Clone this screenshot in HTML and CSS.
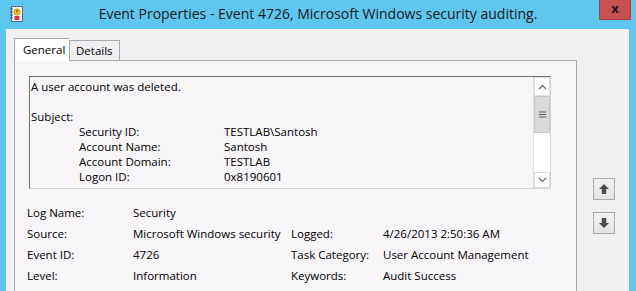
FILE: index.html
```html
<!DOCTYPE html>
<html lang="en">
<head>
  <meta charset="UTF-8">
  <title>Event Properties</title>
  <link rel="stylesheet" href="styles.css">
</head>
<body>
  <div class="window">
    <div class="titlebar">
      <svg class="app-icon" width="14" height="16" viewBox="0 0 14 16">
        <rect x="2.5" y="0.5" width="11" height="15" fill="#f4f4f4" stroke="#5a6a8a"/>
        <path d="M1 3h3M1 6h3M1 9h3M1 12h3" stroke="#4a5a7a" stroke-width="1.2"/>
        <circle cx="8" cy="6" r="3.2" fill="#f2c21b" stroke="#b8860b" stroke-width="0.6"/>
        <path d="M8 4v2.6" stroke="#5a3a00" stroke-width="1.1"/>
        <rect x="5.5" y="10" width="5" height="4" fill="#d2394a"/>
      </svg>
      <div class="title">Event Properties - Event 4726, Microsoft Windows security auditing.</div>
      <div class="close">x</div>
    </div>

    <div class="client">
      <div class="tabs">
        <div class="tabstrip">
          <div class="tab active">General</div>
          <div class="tab">Details</div>
        </div>
        <div class="panel">
          <div class="message">
            <div class="message-text">
              <div class="line">A user account was deleted.</div>
              <div class="line">&nbsp;</div>
              <div class="line">Subject:</div>
              <div class="line pair"><span class="key">Security ID:</span><span>TESTLAB\Santosh</span></div>
              <div class="line pair"><span class="key">Account Name:</span><span>Santosh</span></div>
              <div class="line pair"><span class="key">Account Domain:</span><span>TESTLAB</span></div>
              <div class="line pair"><span class="key">Logon ID:</span><span>0x8190601</span></div>
            </div>
            <div class="scrollbar">
              <div class="sb-btn sb-up">
                <svg width="9" height="6" viewBox="0 0 9 6"><path d="M1 5l3.5-3.5L8 5" fill="none" stroke="#606060" stroke-width="1.1"/></svg>
              </div>
              <div class="sb-thumb">
                <svg width="7" height="7" viewBox="0 0 7 7"><path d="M0 1h7M0 3.5h7M0 6h7" stroke="#606060" stroke-width="1.2"/></svg>
              </div>
              <div class="sb-track"></div>
              <div class="sb-btn sb-down">
                <svg width="9" height="6" viewBox="0 0 9 6"><path d="M1 1l3.5 3.5L8 1" fill="none" stroke="#606060" stroke-width="1.1"/></svg>
              </div>
            </div>
          </div>

          <div class="fields">
            <span>Log Name:</span><span>Security</span><span></span><span></span>
            <span>Source:</span><span>Microsoft Windows security</span><span>Logged:</span><span>4/26/2013 2:50:36 AM</span>
            <span>Event ID:</span><span>4726</span><span>Task Category:</span><span>User Account Management</span>
            <span>Level:</span><span>Information</span><span>Keywords:</span><span>Audit Success</span>
          </div>
        </div>
      </div>

      <div class="nav">
        <div class="nav-btn">
          <svg width="12" height="12" viewBox="0 0 12 12"><polygon points="6,1 11,6 8.2,6 8.2,11 3.8,11 3.8,6 1,6" fill="#4d4d4d"/></svg>
        </div>
        <div class="nav-btn">
          <svg width="12" height="12" viewBox="0 0 12 12"><polygon points="6,11 11,6 8.2,6 8.2,1 3.8,1 3.8,6 1,6" fill="#4d4d4d"/></svg>
        </div>
      </div>
    </div>
  </div>
</body>
</html>
```

FILE: styles.css
```css
:root {
  --frame: #5fc6ee;
  --client: #f3f0f4;
  --panel: #f7f5f8;
  --border: #a9a9a9;
}

* {
  margin: 0;
  padding: 0;
  box-sizing: border-box;
}

body {
  font-family: 'Open Sans', 'Noto Sans', sans-serif;
  font-size: 11.5px;
  color: #000;
  background-color: var(--frame);
  overflow: hidden;
}

.window {
  display: flex;
  flex-direction: column;
  height: 100vh;
}

.titlebar {
  height: 29px;
  display: grid;
  grid-template-columns: 1fr auto 1fr;
  align-items: start;
}

.app-icon {
  margin: 6px 0 0 9px;
}

.title {
  font-size: 14px;
  line-height: 28px;
  color: #1a1a1a;
}

.close {
  justify-self: end;
  width: 32px;
  height: 20px;
  margin-right: 5px;
  background-color: #c75050;
  border: 1px solid #a64343;
  border-top: none;
  color: #1a1a1a;
  font-weight: bold;
  font-size: 13px;
  line-height: 17px;
  text-align: center;
}

.client {
  flex: 1;
  display: flex;
  margin: 0 7px 0 6px;
  padding: 8px 0 0 8px;
  background-color: var(--client);
  overflow: hidden;
}

.tabs {
  width: 563px;
  display: flex;
  flex-direction: column;
}

.tabstrip {
  display: flex;
  align-items: flex-end;
  height: 23px;
}

.tab {
  height: 20px;
  padding: 0 6px;
  border: 1px solid var(--border);
  border-bottom: none;
  background-color: #f0eef1;
  line-height: 19px;
}

.tab.active {
  height: 23px;
  width: 55px;
  padding: 0 8px;
  margin-bottom: -1px;
  position: relative;
  z-index: 1;
  background-color: #ffffff;
  border-right: none;
  line-height: 21px;
}

.panel {
  flex: 1;
  border: 1px solid var(--border);
  border-bottom: none;
  background-color: var(--panel);
  padding: 15px 0 0 12px;
}

.message {
  display: flex;
  width: 522px;
  height: 113px;
  margin-left: 2px;
  border: 1px solid #d5d5d5;
  border-top-color: #707070;
  border-left-color: #707070;
}

.message-text {
  flex: 1;
  padding: 2px 0 0 1px;
  line-height: 15px;
  overflow: hidden;
}

.pair {
  display: flex;
  padding-left: 48px;
}

.key {
  width: 145px;
}

.scrollbar {
  width: 17px;
  display: flex;
  flex-direction: column;
  background-color: #ffffff;
  border-left: 1px solid #e2e2e2;
}

.sb-btn {
  display: flex;
  align-items: center;
  justify-content: center;
  border: 1px solid #dcdcdc;
  background-color: #ffffff;
}

.sb-up {
  height: 19px;
}

.sb-down {
  height: 16px;
}

.sb-thumb {
  height: 37px;
  display: flex;
  align-items: center;
  justify-content: center;
  background-color: #dadada;
  border: 1px solid #c6c6c6;
}

.sb-track {
  flex: 1;
}

.fields {
  display: grid;
  grid-template-columns: 106px 158px 92px auto;
  grid-auto-rows: 21px;
  align-items: center;
  margin-top: 13px;
}

.nav {
  display: flex;
  flex-direction: column;
  gap: 12px;
  padding: 141px 0 0 16px;
}

.nav-btn {
  width: 22px;
  height: 22px;
  display: flex;
  align-items: center;
  justify-content: center;
  border: 1px solid #acacac;
  background: linear-gradient(#f2f2f2, #e3e3e3);
}
```
